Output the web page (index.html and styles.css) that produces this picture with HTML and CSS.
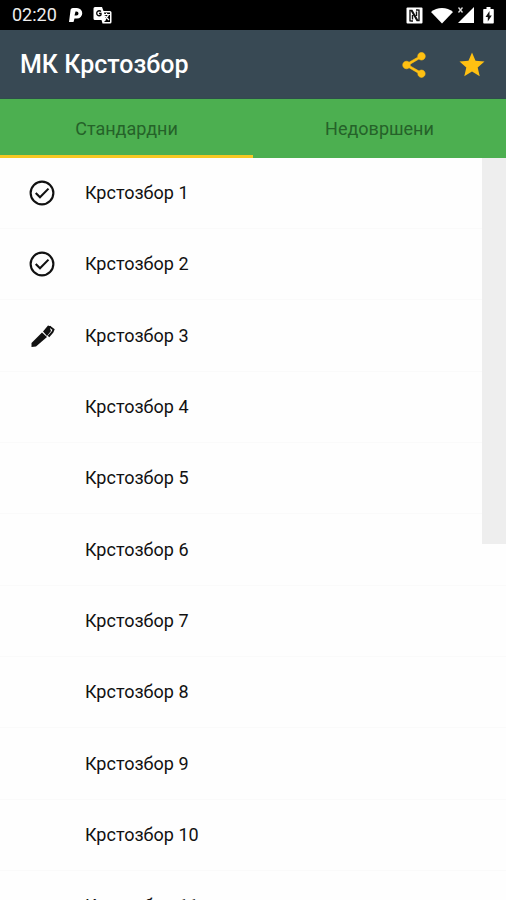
FILE: index.html
```html
<!DOCTYPE html>
<html lang="mk">
<head>
<meta charset="utf-8">
<meta name="viewport" content="width=device-width, initial-scale=1">
<title>МК Крстозбор</title>
<link rel="stylesheet" href="styles.css">
</head>
<body>
<div class="screen">
  <div class="status">
    <span class="clock">02:20</span>
    <svg class="status-app" width="14" height="16" viewBox="0 0 14 16"><path fill="#fff" fill-rule="evenodd" d="M4 1h4a5 5 0 0 1 0 10.500H5.500L4.500 15H0L1.500 3.500A2.500 2.500 0 0 1 4 1zm2.500 3.500L5.500 8.500H7.500a2 2 0 0 0 0-4z"/></svg>
    <svg class="status-translate" width="19" height="18" viewBox="0 0 19 18"><path fill="#fff" d="M2 1h7l1.500 4H17a1.500 1.500 0 0 1 1.500 1.500V16a1.500 1.500 0 0 1-1.500 1.500H9.500L8.500 14H2a1.500 1.500 0 0 1-1.500-1.500v-10A1.500 1.500 0 0 1 2 1z"/><path fill="none" stroke="#000" stroke-width="1.300" d="M8 5.500A2.500 2.500 0 1 0 8 9V7.500H6"/><path fill="#000" d="M11 6.500h6V16h-6l2-2z"/><path fill="none" stroke="#fff" stroke-width="1.200" d="M10.500 8.500H17M13.500 7v1.500M15.500 8.500c-.5 2-2 3.500-3.500 4.500M12 10l4 4"/></svg>
    <span class="spacer"></span>
    <svg class="status-nfc" width="17" height="17" viewBox="0 0 17 17"><rect x=".5" y=".5" width="16" height="16" rx="1" fill="#fff"/><path fill="none" stroke="#111" stroke-width="1.400" d="M4 14.500V3.500h2l5.500 9.500M7 14H4.500M13 2.500v11h-2L5.500 4M10 3h2.500M6.500 8v4.500M10.500 4.500V9"/></svg>
    <svg class="status-wifi" width="22" height="17" viewBox="0 0 22 17"><path fill="#fff" d="M0 5C6-.5 16-.5 22 5L11 16.500z"/></svg>
    <svg class="status-signal" width="18" height="18" viewBox="0 0 18 18"><path fill="#fff" d="M17 1v16H1z"/><path stroke="#ddd" stroke-width="1.300" d="M1.500 1.500l4 5M5.500 1.500l-4 5"/></svg>
    <svg class="status-battery" width="11" height="17" viewBox="0 0 11 17"><path fill="#fff" d="M3.500 0h4v2H10a.8.800 0 0 1 .8.800v13a.8.800 0 0 1-.8.800H1a.8.800 0 0 1-.8-.8v-13A.8.800 0 0 1 1 2h2.500z"/><path fill="#111" d="M6.500 4L2.500 10h2.300v4.500l4-6H6.500z"/></svg>
  </div>
  <header class="appbar">
    <h1>МК Крстозбор</h1>
    <button type="button" class="action" aria-label="Сподели"><svg width="30" height="30" viewBox="0 0 24 24"><path fill="#ffc012" stroke="#ffc012" stroke-width=".5" d="M18 16.080c-.76 0-1.440.3-1.960.77L8.910 12.700c.05-.23.09-.46.09-.7s-.04-.47-.09-.7l7.050-4.110c.54.5 1.250.81 2.040.81 1.660 0 3-1.340 3-3s-1.340-3-3-3-3 1.340-3 3c0 .24.040.47.090.7L8.040 9.810C7.500 9.310 6.790 9 6 9c-1.660 0-3 1.340-3 3s1.340 3 3 3c.79 0 1.500-.31 2.040-.81l7.120 4.160c-.05.21-.08.43-.08.65 0 1.610 1.310 2.920 2.920 2.920s2.920-1.310 2.920-2.920-1.310-2.920-2.920-2.920z"/></svg></button>
    <button type="button" class="action" aria-label="Оцени"><svg width="30" height="30" viewBox="0 0 24 24"><path fill="#ffc012" d="M12 17.270L18.180 21l-1.640-7.030L22 9.240l-7.190-.61L12 2 9.190 8.630 2 9.240l5.460 4.730L5.820 21z"/></svg></button>
  </header>
  <nav class="tabs">
    <button type="button" class="tab selected">Стандардни</button>
    <button type="button" class="tab">Недовршени</button>
  </nav>
  <main class="content">
    <ul class="list">
      <li><svg class="state" width="30" height="30" viewBox="0 0 24 24"><circle cx="12" cy="12" r="9.100" fill="none" stroke="#111" stroke-width="1.700"/><path fill="none" stroke="#111" stroke-width="1.700" d="M7 12l3.400 3.400 6.800-6.900"/></svg><span>Крстозбор 1</span></li>
      <li><svg class="state" width="30" height="30" viewBox="0 0 24 24"><circle cx="12" cy="12" r="9.100" fill="none" stroke="#111" stroke-width="1.700"/><path fill="none" stroke="#111" stroke-width="1.700" d="M7 12l3.400 3.400 6.800-6.900"/></svg><span>Крстозбор 2</span></li>
      <li><svg class="state" width="30" height="30" viewBox="0 0 30 30"><path fill="#111" d="M4.500 22L15 11.500l5 4.500L9 25.500l-4.500.5z"/><path fill="#111" d="M16 10.500L21 4.500l3 1-1 2 1 2.500-4 5z"/><path fill="none" stroke="#111" stroke-width="2" d="M22.500 5.500l4 3-1 2.500-4 4.500"/></svg><span>Крстозбор 3</span></li>
      <li><span class="state"></span><span>Крстозбор 4</span></li>
      <li><span class="state"></span><span>Крстозбор 5</span></li>
      <li><span class="state"></span><span>Крстозбор 6</span></li>
      <li><span class="state"></span><span>Крстозбор 7</span></li>
      <li><span class="state"></span><span>Крстозбор 8</span></li>
      <li><span class="state"></span><span>Крстозбор 9</span></li>
      <li><span class="state"></span><span>Крстозбор 10</span></li>
      <li><span class="state"></span><span>Крстозбор 11</span></li>
    </ul>
    <div class="thumb"></div>
  </main>
</div>
</body>
</html>
```
FILE: styles.css
```css
* { box-sizing: border-box; }

body {
  margin: 0;
  font-family: Roboto, "Liberation Sans", sans-serif;
  background: #fefefe;
  color: #111;
}

button {
  border: 0;
  padding: 0;
  background: none;
  font: inherit;
  cursor: pointer;
}

svg { display: block; flex: none; }

.screen {
  display: flex;
  flex-direction: column;
  height: 100vh;
  overflow: hidden;
}

.status {
  display: flex;
  flex: none;
  align-items: center;
  height: 30px;
  padding: 0 12px;
  background: #000;
  color: #eee;
}

.clock { font-size: 18px; line-height: 30px; }
.status-app { margin-left: 12px; }
.status-translate { margin-left: 10px; }
.spacer { flex: 1; }
.status-wifi { margin-left: 8px; }
.status-signal { margin-left: 4px; }
.status-battery { margin-left: 8px; }

.appbar {
  display: flex;
  flex: none;
  align-items: center;
  gap: 28px;
  height: 69px;
  padding: 2px 19px 0 20px;
  background: #384954;
  border-bottom: 1px solid #2f4d4c;
}

h1 {
  flex: 1;
  margin: 0;
  font-size: 25px;
  line-height: 32px;
  font-weight: 500;
  color: #fff;
}

.tabs {
  display: grid;
  grid-template-columns: 1fr 1fr;
  flex: none;
  height: 59px;
  background: #4caf50;
}

.tab {
  padding-top: 3px;
  border-bottom: 3px solid transparent;
  font-size: 18px;
  color: #256229;
}

.tab.selected { border-bottom-color: #f5c823; }

.content {
  position: relative;
  flex: 1;
  min-height: 0;
}

.list {
  height: 100%;
  margin: 0;
  padding: 0;
  overflow: hidden;
  list-style: none;
}

.list li {
  display: flex;
  align-items: center;
  gap: 28px;
  height: 71px;
  padding-left: 27px;
  border-bottom: 1px solid #fafafa;
  font-size: 18px;
  line-height: 24px;
}

.list li:nth-child(3n) { height: 72px; }

.state { flex: none; width: 30px; }

.thumb {
  position: absolute;
  top: 0;
  right: 0;
  width: 24px;
  height: 52%;
  background: #eee;
}
```
